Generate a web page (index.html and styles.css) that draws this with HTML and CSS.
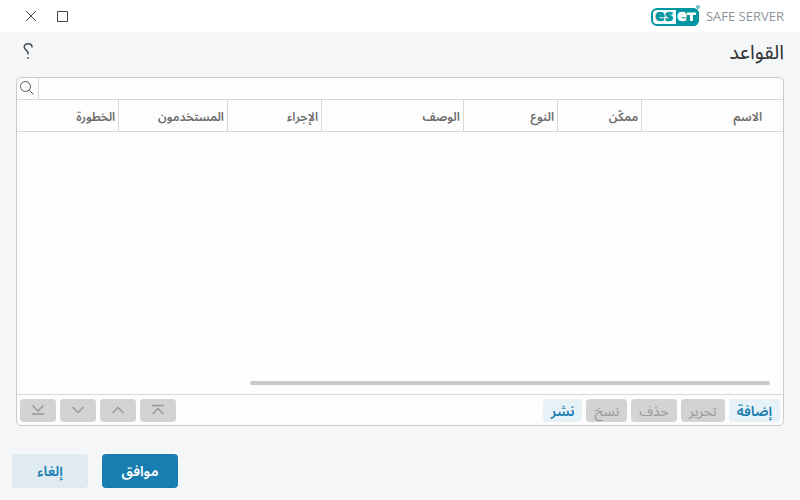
FILE: index.html
```html
<!DOCTYPE html>
<html lang="ar" dir="rtl">
<head>
<meta charset="utf-8">
<title>القواعد</title>
<link rel="stylesheet" href="styles.css">
</head>
<body>
<header class="titlebar">
  <div class="brand">
    <svg class="logo" viewBox="0 0 50 24" role="img" aria-label="eset" direction="ltr">
      <rect x="1" y="5" width="46" height="16" rx="5" fill="#fff" stroke="#0096a1" stroke-width="2"/>
      <path d="M25 4h17a6 6 0 0 1 6 6v6a6 6 0 0 1-6 6H25z" fill="#0096a1"/>
      <text class="logo-text" x="4" y="17" fill="#0096a1" stroke="#0096a1">es</text>
      <text class="logo-text" x="26" y="17" fill="#fff" stroke="#fff">e</text>
      <path d="M36 8.500h9V11h-3v6h-3v-6h-3z" fill="#fff"/>
      <circle cx="47" cy="3" r="1.500" fill="#8ccdd2" stroke="#59b8c0"/>
    </svg>
    <span class="product" dir="ltr">SAFE SERVER</span>
  </div>
  <div class="window-controls">
    <button class="window-button" type="button" aria-label="تكبير">
      <svg viewBox="0 0 12 12"><path d="M.5 1.500h10v10H.5z"/></svg>
    </button>
    <button class="window-button" type="button" aria-label="إغلاق">
      <svg viewBox="0 0 12 12"><path d="M1 1l10 10M11 1L1 11"/></svg>
    </button>
  </div>
</header>
<main class="content">
  <div class="heading">
    <h1 class="title">القواعد</h1>
    <button class="help" type="button" aria-label="تعليمات">
      <svg viewBox="0 0 10 18"><path d="M9 5.500V5C9 3 7.500 1.700 5.200 1.700 2.800 1.700 1.200 3 1.200 5c0 3 3.800 3.200 3.800 6v1.500M5 15v1.800"/></svg>
    </button>
  </div>
  <section class="panel">
    <div class="search">
      <input class="search-input" type="search" aria-label="بحث">
      <button class="search-button" type="button" aria-label="بحث">
        <svg viewBox="0 0 16 16"><circle cx="6.500" cy="6.500" r="5"/><path d="M10.200 10.200l4.300 4.300"/></svg>
      </button>
    </div>
    <div class="grid">
      <table class="rules">
        <colgroup>
          <col class="col-name"><col class="col-enabled"><col class="col-type"><col class="col-description"><col class="col-action"><col class="col-users"><col class="col-severity">
        </colgroup>
        <thead>
          <tr><th>الاسم</th><th>ممكّن</th><th>النوع</th><th>الوصف</th><th>الإجراء</th><th>المستخدمون</th><th>الخطورة</th></tr>
        </thead>
      </table>
      <div class="scrollbar"><div class="thumb"></div></div>
    </div>
    <div class="toolbar">
      <div class="group">
        <button class="tool" type="button">إضافة</button>
        <button class="tool" type="button" disabled>تحرير</button>
        <button class="tool" type="button" disabled>حذف</button>
        <button class="tool" type="button" disabled>نسخ</button>
        <button class="tool" type="button">نشر</button>
      </div>
      <div class="group">
        <button class="tool move" type="button" disabled aria-label="إلى الأعلى"><svg viewBox="0 0 14 12"><path d="M1 1.500h12M1.500 10L7 4.500l5.500 5.500"/></svg></button>
        <button class="tool move" type="button" disabled aria-label="أعلى"><svg viewBox="0 0 14 12"><path d="M1.500 9L7 3.500 12.500 9"/></svg></button>
        <button class="tool move" type="button" disabled aria-label="أسفل"><svg viewBox="0 0 14 12"><path d="M1.500 3L7 8.500 12.500 3"/></svg></button>
        <button class="tool move" type="button" disabled aria-label="إلى الأسفل"><svg viewBox="0 0 14 12"><path d="M1 10h12M1.500 1.500L7 7l5.500-5.500"/></svg></button>
      </div>
    </div>
  </section>
</main>
<footer class="actions">
  <button class="action primary" type="button">موافق</button>
  <button class="action" type="button">إلغاء</button>
</footer>
</body>
</html>
```
FILE: styles.css
```css
* { box-sizing: border-box; }

body {
  display: flex;
  flex-direction: column;
  min-height: 100vh;
  margin: 0;
  background: #f4f6f8;
  color: #333;
  font-family: "Open Sans", "Noto Sans Arabic", "DejaVu Sans", sans-serif;
  font-size: 12px;
}

button {
  margin: 0;
  padding: 0;
  border: 0;
  background: none;
  font: inherit;
}

svg {
  display: block;
  fill: none;
  stroke: currentColor;
}

.titlebar {
  display: flex;
  justify-content: space-between;
  align-items: center;
  height: 32px;
  padding: 0 16px 0 25px;
  background: #fff;
}

.brand {
  display: flex;
  flex-direction: row-reverse;
  align-items: center;
  gap: 5px;
}

.logo {
  width: 50px;
  height: 24px;
  stroke: none;
}

.logo-text {
  direction: ltr;
  font-family: "Open Sans", sans-serif;
  font-size: 16px;
  font-weight: 800;
  stroke-width: 0.500;
}

.product {
  color: #8c959d;
  font-size: 13px;
  line-height: 20px;
}

.window-controls {
  display: flex;
  gap: 20px;
}

.window-button svg {
  width: 12px;
  height: 12px;
  color: #444;
}

.content {
  display: flex;
  flex: 1;
  flex-direction: column;
  padding: 0 16px;
}

.heading {
  display: flex;
  justify-content: space-between;
  align-items: center;
  height: 45px;
}

.title {
  margin: 0 0 4px;
  font-size: 20px;
  font-weight: 400;
}

.help {
  margin: 0 0 8px 7px;
  color: #424d57;
}

.help svg {
  width: 10px;
  height: 18px;
  stroke-width: 1.500;
}

.panel {
  display: flex;
  flex: 1;
  flex-direction: column;
  overflow: hidden;
  border: 1px solid #ccc;
  border-radius: 5px;
  background: #fdfdfd;
}

.search {
  display: flex;
  height: 22px;
  border-bottom: 1px solid #d8d8d8;
}

.search-input {
  flex: 1;
  min-width: 0;
  padding: 0 8px;
  border: 0;
  outline: 0;
  background: transparent;
  font: inherit;
}

.search-button {
  width: 22px;
  padding: 0 3px 2px;
  border-right: 1px solid #d8d8d8;
  color: #555;
}

.search-button svg {
  width: 16px;
  height: 16px;
}

.grid {
  display: flex;
  flex: 1;
  flex-direction: column;
  justify-content: space-between;
}

.rules {
  width: 100%;
  border-bottom: 1px solid #d8d8d8;
  border-spacing: 0;
  table-layout: fixed;
}

.col-name { width: 18.500%; }
.col-enabled { width: 11%; }
.col-type { width: 12.300%; }
.col-description { width: 18.500%; }
.col-action { width: 12.300%; }
.col-users { width: 14.200%; }

.rules th {
  height: 31px;
  padding: 2px 3px 0;
  border-left: 1px solid #d8d8d8;
  color: #6b6b6b;
  font-weight: 600;
  line-height: 16px;
  text-align: start;
}

.rules th:first-child { padding-right: 21px; }
.rules th:last-child { border-left: 0; }

.scrollbar {
  padding: 0 13px 9px 0;
}

.thumb {
  width: 69%;
  height: 4px;
  border-radius: 2px;
  background: #c9c9c9;
}

.toolbar {
  display: flex;
  justify-content: space-between;
  padding: 4px 3px 3px;
  border-top: 1px solid #d8d8d8;
}

.group {
  display: flex;
  gap: 4px;
}

.tool {
  height: 23px;
  padding: 0 8px;
  border-radius: 4px;
  background: #e7f1f8;
  color: #187db1;
  font-size: 14px;
  font-weight: 600;
  line-height: 22px;
}

.tool:disabled {
  background: #d3d3d3;
  color: #999;
  font-weight: 400;
}

.move {
  width: 36px;
  padding: 0 11px 2px;
}

.move svg {
  width: 14px;
  height: 12px;
  stroke-width: 1.500;
}

.actions {
  display: flex;
  justify-content: flex-end;
  gap: 14px;
  padding: 28px 12px 12px;
}

.action {
  width: 76px;
  height: 34px;
  border-radius: 4px;
  background: #dfeaf1;
  color: #187db1;
  font-size: 14px;
  font-weight: 600;
}

.primary {
  background: #187db1;
  color: #fff;
}
```
